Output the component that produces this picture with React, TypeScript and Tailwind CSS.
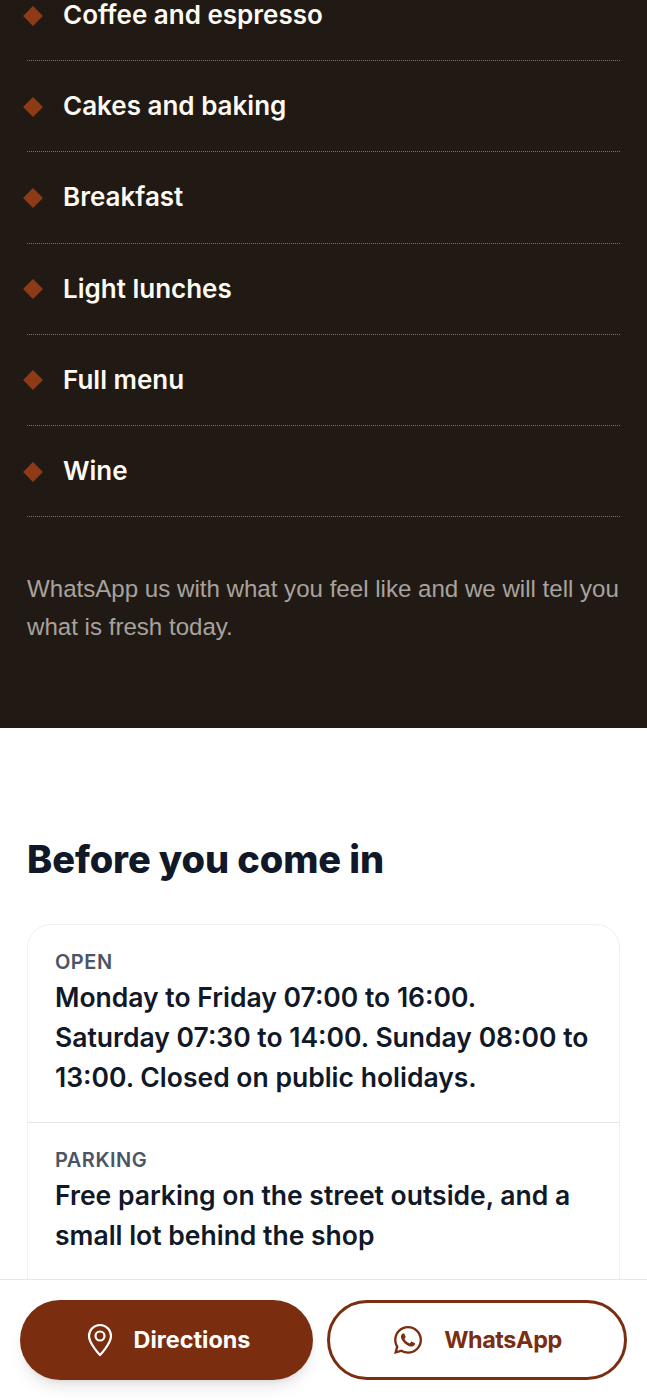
import { FaWhatsapp } from 'react-icons/fa';

const items = ['Coffee and espresso', 'Cakes and baking', 'Breakfast', 'Light lunches', 'Full menu', 'Wine'];

const details = [
    { label: 'OPEN', text: 'Monday to Friday 07:00 to 16:00.\nSaturday 07:30 to 14:00. Sunday 08:00 to 13:00. Closed on public holidays.' },
    { label: 'PARKING', text: 'Free parking on the street outside, and a small lot behind the shop' },
];

export default function App() {
    return (
        <div className="relative h-[1400px] overflow-hidden bg-white font-['Inter',sans-serif]">
            <section className="-mt-[30px] h-[758px] bg-[#211a14] px-[27px]">
                <ul>
                    {items.map((item) => (
                        <li key={item} className="flex h-[91.2px] items-center gap-[23px] border-b border-dotted border-[#7a746c] pb-[1px]">
                            <span className="mt-[2px] ml-[-1px] h-[14px] w-[14px] rotate-45 bg-[#8f3a17]" />
                            <span className="text-[26px] font-semibold text-[#fdfaf3]">{item}</span>
                        </li>
                    ))}
                </ul>
                <p className="mt-[53px] font-['Liberation_Sans',sans-serif] text-[24.1px] leading-[38px] text-[#a8a29e]">
                    WhatsApp us with what you feel like and we will tell you what is fresh today.
                </p>
            </section>

            <section className="px-[27px] pt-[106px]">
                <h2 className="text-[38px] leading-[50px] font-extrabold tracking-[-0.1px] text-[#111827]">Before you come in</h2>
                <div className="mt-[40px] rounded-[24px] border border-[#f0f0f0] pb-[40px]">
                    {details.map((d) => (
                        <div key={d.label} className="border-b border-[#e5e5e5] px-[27px] pt-[23px] pb-[25px]">
                            <div className="text-[20px] leading-[28px] font-semibold tracking-[0.5px] text-[#4b5563]">{d.label}</div>
                            <p className="mt-[1px] text-[26.5px] leading-[40px] font-semibold whitespace-pre-line text-[#111827]">{d.text}</p>
                        </div>
                    ))}
                </div>
            </section>

            <div className="absolute inset-x-0 bottom-0 flex h-[121px] gap-[14px] border-t border-[#e5e7eb] bg-white px-[20px] pt-[20px]">
                <a className="flex h-[80px] w-[293px] items-center justify-center gap-[21px] rounded-[40px] bg-[#7b2d0f] pl-[4px] text-[23.4px] font-bold text-white shadow-lg">
                    <svg width="26" height="34" viewBox="0 0 26 34" fill="none" stroke="currentColor" strokeWidth="2.2" strokeLinejoin="round">
                        <path d="M13 2C6.9 2 2 6.9 2 13c0 7.6 11 19 11 19s11-11.400 11-19C24 6.900 19.100 2 13 2z" />
                        <circle cx="13" cy="13" r="4.500" />
                    </svg>
                    Directions
                </a>
                <a className="flex h-[80px] w-[300px] items-center justify-center gap-[20px] rounded-[40px] border-[3px] border-[#7b2d0f] bg-white text-[23.4px] font-bold tracking-[-0.4px] text-[#7b2d0f]">
                    <FaWhatsapp size={32} />
                    WhatsApp
                </a>
            </div>
        </div>
    );
}
